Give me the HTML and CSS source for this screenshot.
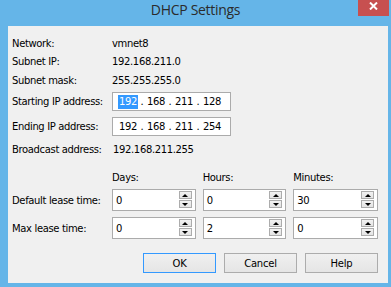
FILE: index.html
```html
<!DOCTYPE html>
<html>
    <head>
        <title>DHCP Settings</title>
        <meta charset="UTF-8">
        <link rel="stylesheet" href="styles.css">
    </head>
    <body>
        <div class="window">
            <div class="titlebar">
                <span></span>
                <span class="title">DHCP Settings</span>
                <span class="close">
                    <svg width="9" height="8" viewBox="0 0 9 8">
                        <path d="M1 0.5 L8 7.5 M8 0.5 L1 7.5" stroke="#fff" stroke-width="2" fill="none"/>
                    </svg>
                </span>
            </div>

            <div class="client">
                <!-- Сведения о сети -->
                <div class="row r18"><span class="label">Network:</span><span>vmnet8</span></div>
                <div class="row r19"><span class="label">Subnet IP:</span><span>192.168.211.0</span></div>
                <div class="row r18"><span class="label">Subnet mask:</span><span>255.255.255.0</span></div>

                <div class="row ip-row first">
                    <span class="label">Starting IP address:</span>
                    <div class="ipbox">
                        <span class="seg sel">192</span><span class="dot">.</span>
                        <span class="seg">168</span><span class="dot">.</span>
                        <span class="seg">211</span><span class="dot">.</span>
                        <span class="seg">128</span>
                    </div>
                </div>
                <div class="row ip-row">
                    <span class="label">Ending IP address:</span>
                    <div class="ipbox">
                        <span class="seg">192</span><span class="dot">.</span>
                        <span class="seg">168</span><span class="dot">.</span>
                        <span class="seg">211</span><span class="dot">.</span>
                        <span class="seg">254</span>
                    </div>
                </div>
                <div class="row r18 broadcast"><span class="label">Broadcast address:</span><span>192.168.211.255</span></div>

                <!-- Время аренды -->
                <div class="row r18 lease-head">
                    <span class="label"></span>
                    <span class="col c1">Days:</span>
                    <span class="col c2">Hours:</span>
                    <span class="col c3">Minutes:</span>
                </div>
                <div class="row lease-row first">
                    <span class="label">Default lease time:</span>
                    <div class="spin c1"><span class="val">0</span><span class="arrows"><span class="btn up"></span><span class="btn down"></span></span></div>
                    <div class="spin c2"><span class="val">0</span><span class="arrows"><span class="btn up"></span><span class="btn down"></span></span></div>
                    <div class="spin c3"><span class="val">30</span><span class="arrows"><span class="btn up"></span><span class="btn down"></span></span></div>
                </div>
                <div class="row lease-row">
                    <span class="label">Max lease time:</span>
                    <div class="spin c1"><span class="val">0</span><span class="arrows"><span class="btn up"></span><span class="btn down"></span></span></div>
                    <div class="spin c2"><span class="val">2</span><span class="arrows"><span class="btn up"></span><span class="btn down"></span></span></div>
                    <div class="spin c3"><span class="val">0</span><span class="arrows"><span class="btn up"></span><span class="btn down"></span></span></div>
                </div>

                <div class="buttons">
                    <button class="default">OK</button>
                    <button>Cancel</button>
                    <button>Help</button>
                </div>
            </div>
        </div>
    </body>
</html>
```

FILE: styles.css
```css
body {
    margin: 0;
    font-family: "DejaVu Sans", sans-serif;
    font-size: 10px;
    color: #000;
}

.window {
    width: 391px;
    height: 287px;
    background: #65b5e8;
    display: flex;
    flex-direction: column;
    overflow: hidden;
}

.titlebar {
    height: 26px;
    display: grid;
    grid-template-columns: 1fr auto 1fr;
    align-items: start;
}

.title {
    font-family: "Open Sans", sans-serif;
    font-size: 14px;
    letter-spacing: -0.3px;
    line-height: 20px;
    color: #2b2b2b;
}

.close {
    justify-self: end;
    margin-right: 2px;
    width: 31px;
    height: 16px;
    background: #c75050;
    display: flex;
    justify-content: center;
    align-items: flex-start;
    padding-top: 2px;
    box-sizing: border-box;
}

.client {
    flex: 1;
    margin: 0 3px 4px 8px;
    background: #f0f0f0;
    padding: 8px 10px 0 4px;
    letter-spacing: -0.35px;
}

.row {
    display: flex;
    align-items: center;
    white-space: nowrap;
}

.r18 { height: 18px; }
.r19 { height: 19px; }

.label {
    width: 100px;
    flex: none;
}

.ip-row {
    height: 19px;
    margin-top: 6px;
}

.ip-row.first { margin-top: 3px; }

.broadcast { margin-top: 4px; }
.broadcast .label + span { margin-left: 1px; }

.ipbox {
    width: 119px;
    height: 19px;
    box-sizing: border-box;
    border: 1px solid #ababab;
    background: #fff;
    display: flex;
    align-items: center;
    padding-left: 5px;
}

.seg {
    width: 20px;
    text-align: center;
    line-height: 14px;
}

.seg.sel {
    background: #3399ff;
    color: #fff;
}

.dot {
    width: 8px;
    text-align: center;
}

.lease-head { margin-top: 10px; }

.col.c1, .spin.c1 { width: 84px; }
.col.c2, .spin.c2 { width: 84px; margin-left: 7px; }
.col.c3, .spin.c3 { width: 85px; margin-left: 7px; }

.lease-row {
    height: 22px;
    margin-top: 6px;
}

.lease-row.first { margin-top: 3px; }

.spin {
    height: 22px;
    box-sizing: border-box;
    border: 1px solid #ababab;
    background: #fff;
    display: flex;
    align-items: stretch;
}

.spin .val {
    flex: 1;
    padding-left: 3px;
    display: flex;
    align-items: center;
}

.arrows {
    display: flex;
    flex-direction: column;
    gap: 1px;
    padding: 1px 3px 2px 0;
}

.btn {
    width: 13px;
    height: 8px;
    box-sizing: border-box;
    border: 1px solid #acacac;
    background: linear-gradient(#f2f2f2, #e4e4e4);
    display: flex;
    justify-content: center;
    align-items: center;
}

.btn::after {
    content: "";
    width: 0;
    height: 0;
    border-left: 3px solid transparent;
    border-right: 3px solid transparent;
}

.btn.up::after { border-bottom: 3px solid #000; }
.btn.down::after { border-top: 3px solid #000; }

.buttons {
    margin-top: 14px;
    display: flex;
    justify-content: flex-end;
    gap: 8px;
}

button {
    width: 73px;
    height: 20px;
    border: 1px solid #acacac;
    background: linear-gradient(#f0f0f0, #e5e5e5);
    font-family: "DejaVu Sans", sans-serif;
    font-size: 10px;
    letter-spacing: -0.2px;
    color: #000;
    padding: 0;
}

button.default { border-color: #3399ff; }
```
